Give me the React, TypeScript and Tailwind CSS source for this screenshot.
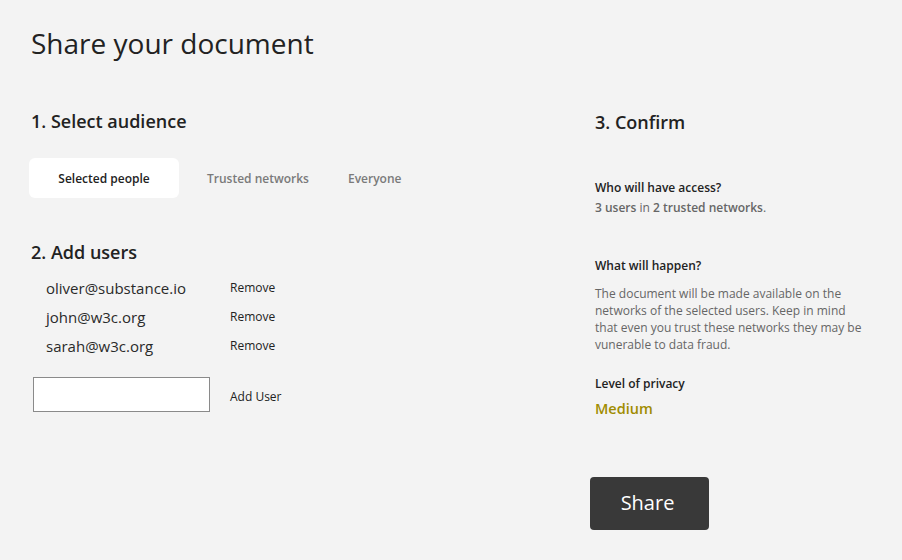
import React from "react";

export default function App() {
  const users = ["oliver@substance.io", "john@w3c.org", "sarah@w3c.org"];
  return (
    <div
      className="w-[902px] h-[560px] overflow-hidden bg-[#f3f3f3] text-[#222222] pl-[31px]"
      style={{ fontFamily: '"Open Sans", sans-serif' }}
    >
      <h1 className="pt-[25px] text-[28px] leading-[36px] font-normal">Share your document</h1>
      <div className="flex">
        {/* left column */}
        <div className="w-[564px] shrink-0">
          <h2 className="mt-[48.3px] text-[18px] leading-[24px] font-semibold">1. Select audience</h2>
          <div className="mt-[24.7px] flex items-center -ml-[2px] h-[40px]">
            <div className="w-[150px] h-[40px] pt-[2px] bg-white rounded-[6px] flex items-center justify-center text-[12px] font-semibold text-[#222]">
              Selected people
            </div>
            <div className="ml-[28px] pt-[2px] text-[12px] font-semibold text-[#7a7a7a]">Trusted networks</div>
            <div className="ml-[39px] pt-[2px] text-[12px] font-semibold text-[#7a7a7a]">Everyone</div>
          </div>
          <h2 className="mt-[42px] text-[18px] leading-[24px] font-semibold">2. Add users</h2>
          <div className="mt-[9.7px]">
            {users.map((u) => (
              <div key={u} className="flex items-center h-[29px]">
                <div className="ml-[15px] w-[184px] text-[15px] leading-[29px] text-[#2a2a2a]">{u}</div>
                <div className="text-[12px] leading-[29px] text-[#222] -mt-[2px]">Remove</div>
              </div>
            ))}
          </div>
          <div className="mt-[16.3px] flex items-center">
            <div className="ml-[2px] w-[177px] h-[35px] bg-white border border-[#8a8a8a]" />
            <div className="ml-[20px] text-[12px] text-[#222] mt-[5px]">Add User</div>
          </div>
        </div>
        {/* right column */}
        <div className="w-[280px] shrink-0">
          <h2 className="mt-[49.3px] text-[18px] leading-[24px] font-semibold">3. Confirm</h2>
          <div className="mt-[44.3px] text-[12px] leading-[18px] font-semibold">Who will have access?</div>
          <div className="mt-[2.4px] text-[12px] leading-[18px] text-[#666]">
            <span className="font-semibold">3 users</span> in <span className="font-semibold">2 trusted networks</span>.
          </div>
          <div className="mt-[40px] text-[12px] leading-[18px] font-semibold">What will happen?</div>
          <p className="mt-[10.1px] text-[12px] leading-[17px] text-[#666] w-[272px]">
            The document will be made available on the networks of the selected users. Keep in mind that even you trust
            these networks they may be vunerable to data fraud.
          </p>
          <div className="mt-[21.9px] text-[12px] leading-[18px] font-semibold">Level of privacy</div>
          <div className="mt-[6.4px] text-[14.5px] leading-[20px] font-semibold text-[#a08c00]">Medium</div>
          <button className="mt-[57.6px] -ml-[5px] w-[119px] h-[53px] pr-[4px] bg-[#393939] rounded-[4px] text-white text-[20px] flex items-center justify-center">
            Share
          </button>
        </div>
      </div>
    </div>
  );
}
